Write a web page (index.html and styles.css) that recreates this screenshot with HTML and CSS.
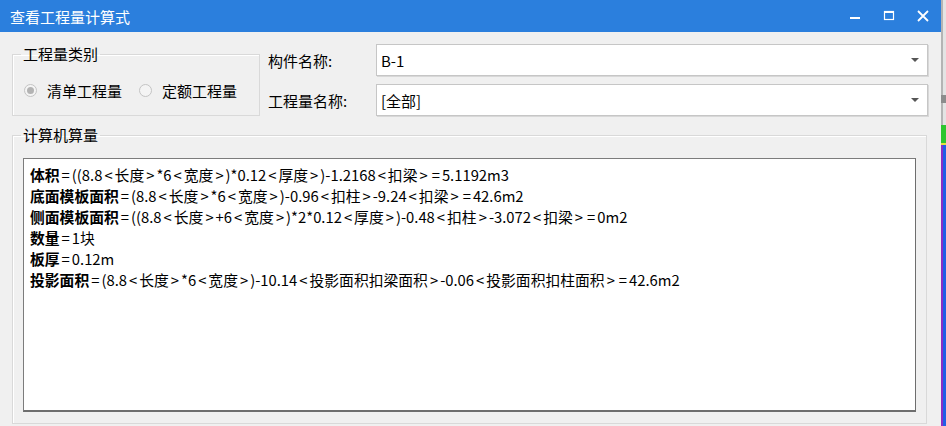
FILE: index.html
```html
<!DOCTYPE html>
<html lang="zh-CN">
<head>
    <meta charset="UTF-8">
    <title>查看工程量计算式</title>
    <link rel="stylesheet" href="styles.css">
</head>
<body>
    <div class="screen">
        <div class="window">
            <div class="titlebar">
                <span class="title">查看工程量计算式</span>
                <div class="controls">
                    <span class="ctl">
                        <svg width="12" height="12" viewBox="0 0 12 12"><rect x="1" y="7" width="10" height="2" fill="#fff"/></svg>
                    </span>
                    <span class="ctl">
                        <svg width="12" height="12" viewBox="0 0 12 12"><rect x="1.5" y="1.5" width="9" height="8" fill="none" stroke="#fff" stroke-width="1.2"/><rect x="1" y="1" width="10" height="2" fill="#fff"/></svg>
                    </span>
                    <span class="ctl">
                        <svg width="12" height="12" viewBox="0 0 12 12"><path d="M1 1 L11 11 M11 1 L1 11" stroke="#fff" stroke-width="1.8"/></svg>
                    </span>
                </div>
            </div>

            <div class="content">
                <div class="top-row">
                    <fieldset class="group kind">
                        <legend>工程量类别</legend>
                        <div class="radios">
                            <span class="radio checked"></span>
                            <span class="radio-label">清单工程量</span>
                            <span class="radio"></span>
                            <span class="radio-label">定额工程量</span>
                        </div>
                    </fieldset>

                    <div class="fields">
                        <div class="field">
                            <label>构件名称:</label>
                            <div class="combo"><span>B-1</span><i class="arrow"></i></div>
                        </div>
                        <div class="field">
                            <label>工程量名称:</label>
                            <div class="combo"><span>[全部]</span><i class="arrow"></i></div>
                        </div>
                    </div>
                </div>

                <fieldset class="group calc">
                    <legend>计算机算量</legend>
                    <div class="result">
                        <div><b>体积</b><i>=</i>((8.8<i>&lt;</i>长度<i>&gt;</i>*6<i>&lt;</i>宽度<i>&gt;</i>)*0.12<i>&lt;</i>厚度<i>&gt;</i>)-1.2168<i>&lt;</i>扣梁<i>&gt;</i><i>=</i>5.1192m3</div>
                        <div><b>底面模板面积</b><i>=</i>(8.8<i>&lt;</i>长度<i>&gt;</i>*6<i>&lt;</i>宽度<i>&gt;</i>)-0.96<i>&lt;</i>扣柱<i>&gt;</i>-9.24<i>&lt;</i>扣梁<i>&gt;</i><i>=</i>42.6m2</div>
                        <div><b>侧面模板面积</b><i>=</i>((8.8<i>&lt;</i>长度<i>&gt;</i>+6<i>&lt;</i>宽度<i>&gt;</i>)*2*0.12<i>&lt;</i>厚度<i>&gt;</i>)-0.48<i>&lt;</i>扣柱<i>&gt;</i>-3.072<i>&lt;</i>扣梁<i>&gt;</i><i>=</i>0m2</div>
                        <div><b>数量</b><i>=</i>1块</div>
                        <div><b>板厚</b><i>=</i>0.12m</div>
                        <div><b>投影面积</b><i>=</i>(8.8<i>&lt;</i>长度<i>&gt;</i>*6<i>&lt;</i>宽度<i>&gt;</i>)-10.14<i>&lt;</i>投影面积扣梁面积<i>&gt;</i>-0.06<i>&lt;</i>投影面积扣柱面积<i>&gt;</i><i>=</i>42.6m2</div>
                    </div>
                </fieldset>
            </div>
        </div>

        <div class="backdrop">
            <div class="bd-light"></div>
            <div class="bd-dark"></div>
            <div class="bd-light short"></div>
            <div class="bd-green"></div>
            <div class="bd-blue"></div>
        </div>
    </div>
</body>
</html>
```

FILE: styles.css
```css
* {
    margin: 0;
    padding: 0;
    box-sizing: border-box;
}

body {
    font-family: "Noto Sans CJK SC", "Noto Sans", sans-serif;
    background: #f0f0f0;
    color: #000000;
    overflow: hidden;
}

.screen {
    display: flex;
    width: 946px;
    height: 426px;
}

.window {
    width: 941px;
    height: 426px;
    display: flex;
    flex-direction: column;
    background: #f0f0f0;
}

/* Title bar */
.titlebar {
    height: 32px;
    background: #2b7fdd;
    display: flex;
    align-items: center;
    padding-left: 10px;
}

.title {
    color: #ffffff;
    font-size: 15px;
    flex: 1;
}

.controls {
    display: flex;
    align-items: center;
    padding-right: 1px;
}

.ctl {
    width: 34px;
    height: 32px;
    display: flex;
    align-items: center;
    justify-content: center;
}

/* Content */
.content {
    padding: 12px 13px 0 12px;
    font-size: 15px;
}

.top-row {
    display: flex;
}

.group {
    border: 1px solid #d9d9d9;
    box-shadow: inset 1px 1px 0 #ffffff;
    padding: 0;
}

.group legend {
    margin-left: 8px;
    padding: 0 2px;
    line-height: 20px;
    font-size: 15px;
}

.kind {
    width: 248px;
    height: 72px;
    flex-shrink: 0;
}

.radios {
    display: flex;
    align-items: center;
    height: 20px;
    margin: 16px 0 0 11px;
    white-space: nowrap;
}

.radio {
    width: 13px;
    height: 13px;
    flex-shrink: 0;
    border-radius: 50%;
    border: 1px solid #c4c4c4;
    background: #f4f4f4;
    display: flex;
    align-items: center;
    justify-content: center;
}

.radio.checked::after {
    content: "";
    width: 7px;
    height: 7px;
    border-radius: 50%;
    background: #b3b3b3;
}

.radio-label {
    margin-left: 10px;
    margin-right: 17px;
}

.fields {
    flex: 1;
    margin-left: 8px;
    display: flex;
    flex-direction: column;
    gap: 8px;
}

.field {
    display: flex;
    align-items: center;
    height: 32px;
}

.field label {
    width: 108px;
}

.combo {
    flex: 1;
    height: 32px;
    background: #ffffff;
    border: 1px solid #c6c6c6;
    box-shadow: 1px 1px 0 #d8d8d8;
    display: flex;
    align-items: center;
    padding-left: 4px;
    padding-right: 8px;
}

.combo span {
    flex: 1;
}

.arrow {
    width: 0;
    height: 0;
    border-left: 4px solid transparent;
    border-right: 4px solid transparent;
    border-top: 4px solid #555555;
}

.calc {
    margin-top: 9px;
    margin-right: 1px;
    height: 299px;
}

.result {
    height: 254px;
    margin: 13px 10px 0 10px;
    background: #ffffff;
    border: 1px solid #7c7c7c;
    border-right-color: #6e6e6e;
    border-bottom: 2px solid #6e6e6e;
    padding: 5px 6px;
    font-size: 14.8px;
    line-height: 21px;
    white-space: nowrap;
}

.result b {
    font-weight: bold;
}

/* the operators sit wider in the original font */
.result i {
    font-style: normal;
    padding: 0 2px;
}

/* Desktop strip behind the window */
.backdrop {
    width: 5px;
    display: flex;
    flex-direction: column;
}

.bd-light {
    height: 95px;
    background: #e4e4e4;
    border-left: 2px solid #b4b4b4;
}

.bd-light.short {
    height: 22px;
}

.bd-dark {
    height: 8px;
    background: #8c8c8c;
}

.bd-green {
    height: 20px;
    background: #2ec52e;
    border-bottom: 2px solid #e6e040;
}

.bd-blue {
    flex: 1;
    background: #1f5fe6;
    border-left: 2px solid #8a2fc4;
}
```
